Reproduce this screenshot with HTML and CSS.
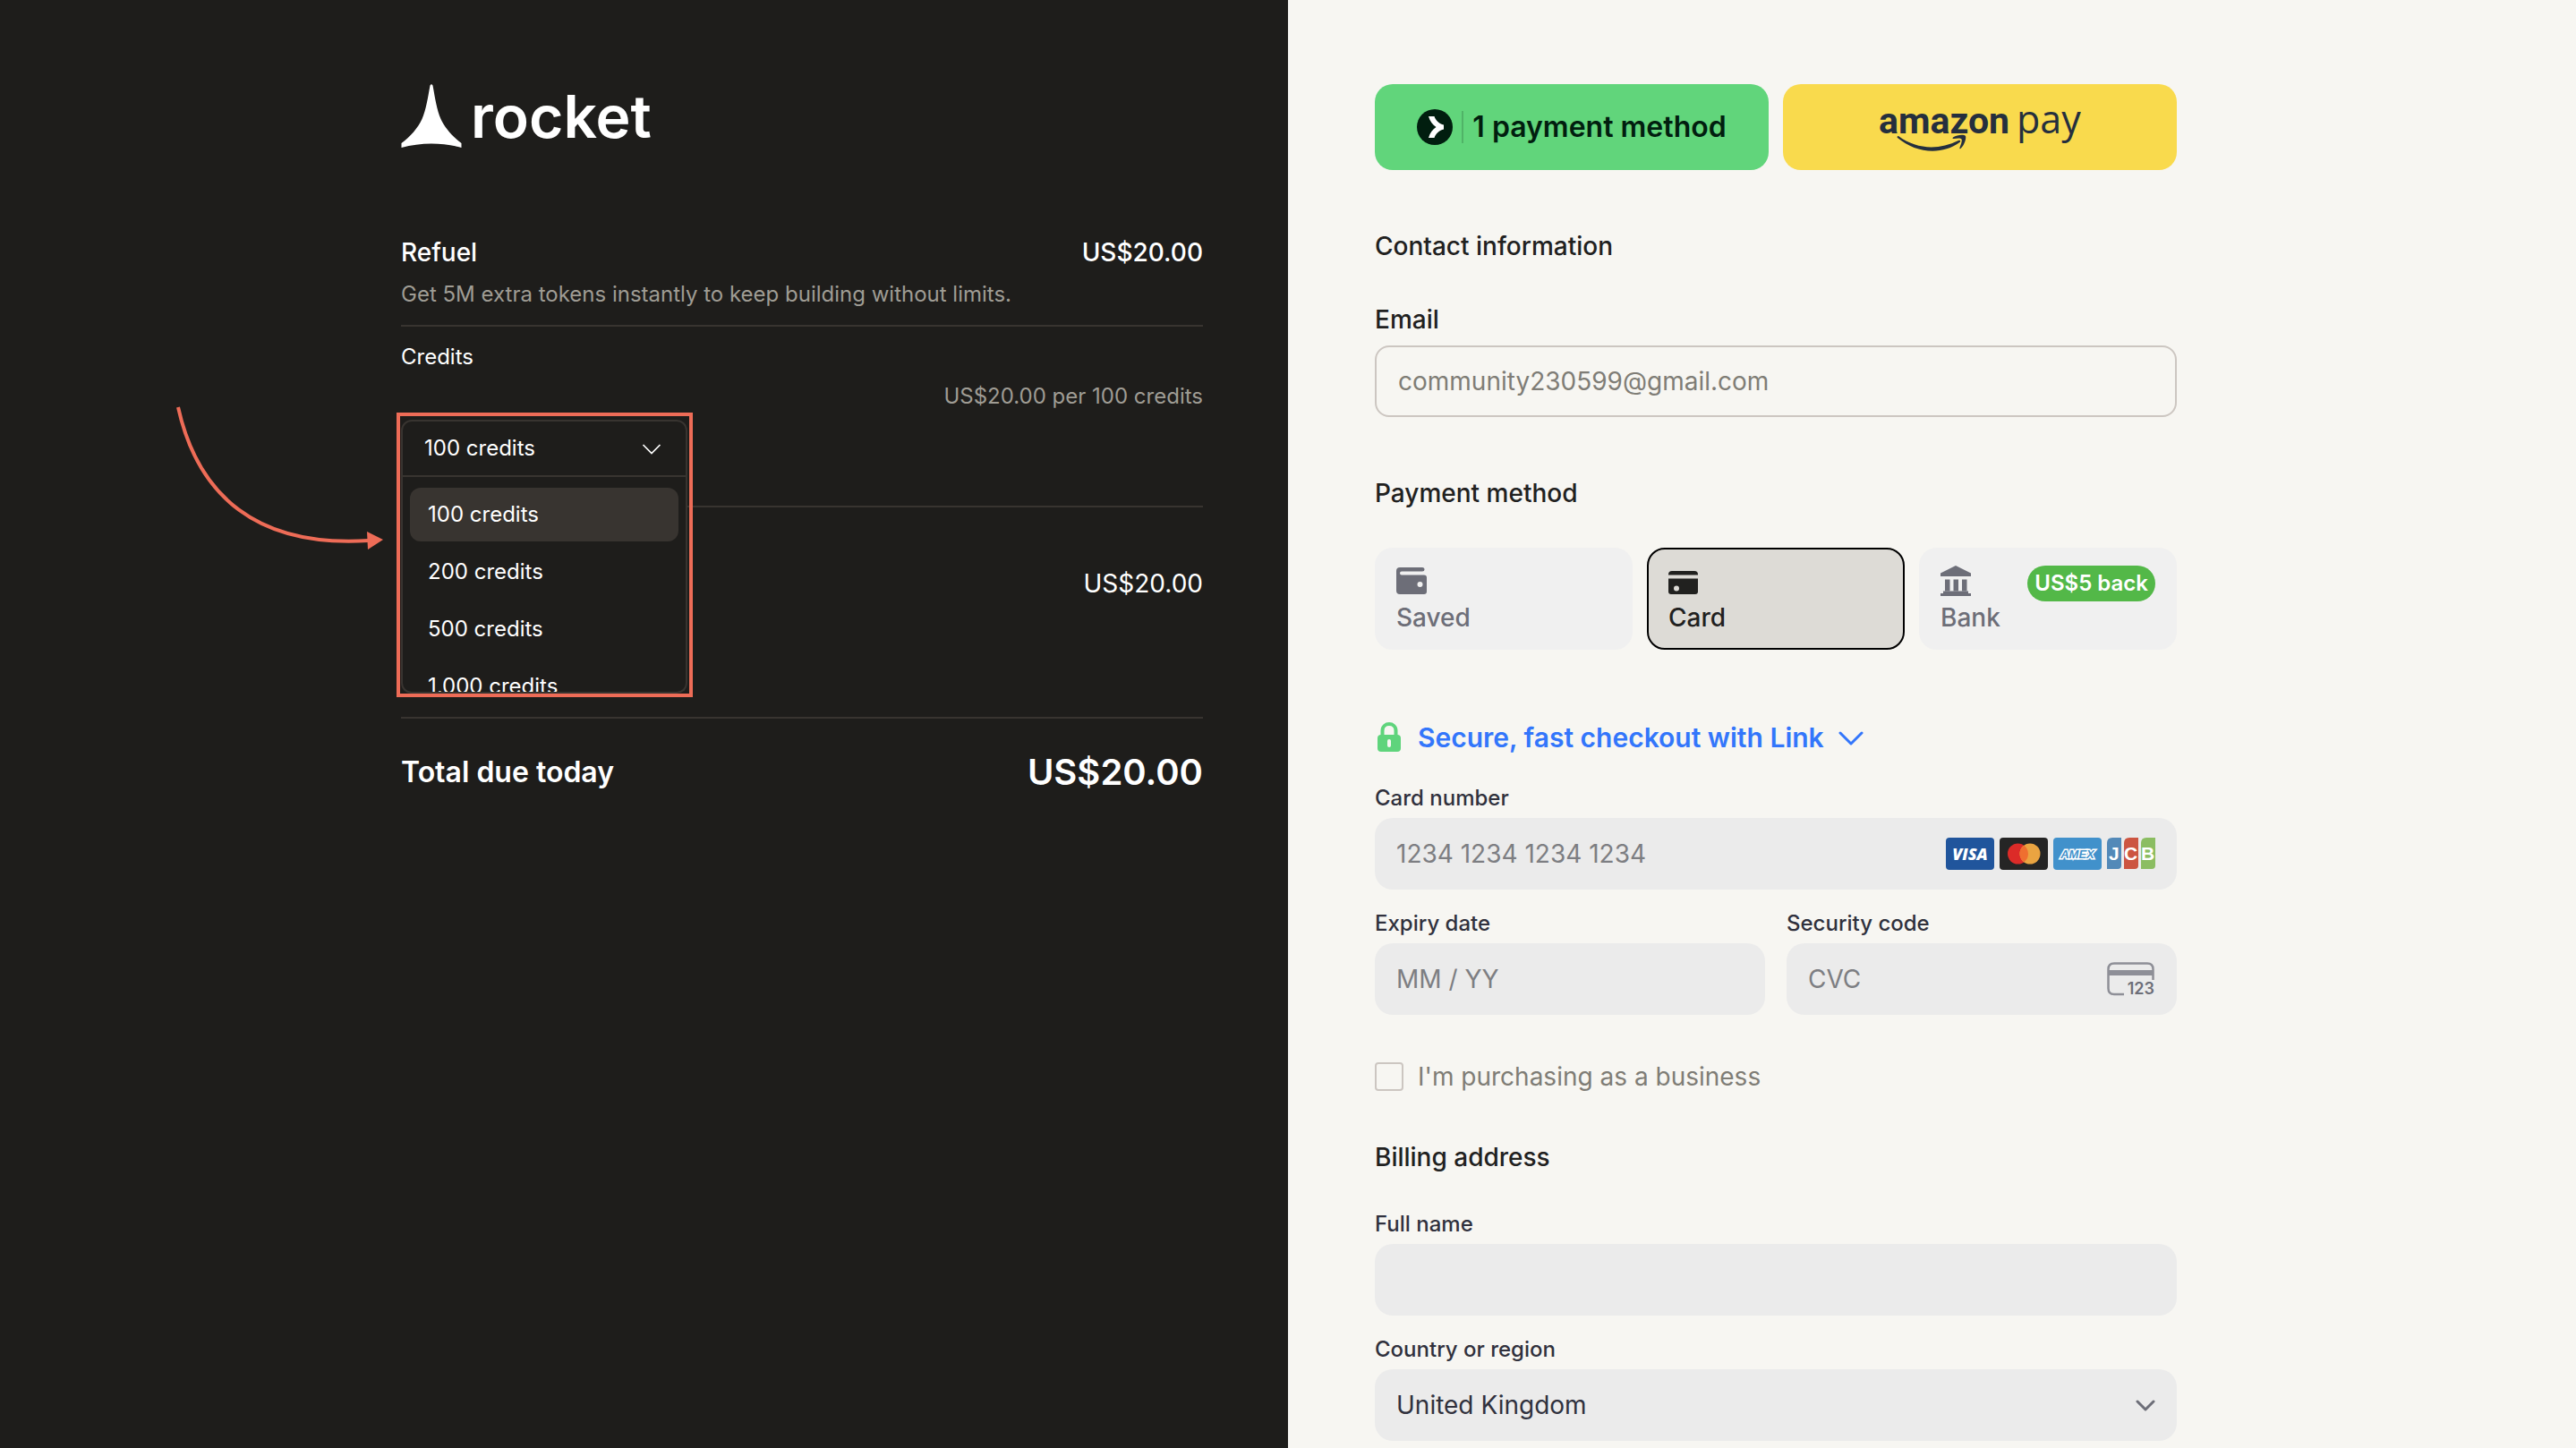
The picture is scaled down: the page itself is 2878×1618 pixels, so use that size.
FILE: index.html
```html
<!DOCTYPE html>
<html lang="en">
<head>
    <meta charset="UTF-8">
    <meta name="viewport" content="width=device-width, initial-scale=1.0">
    <title>Rocket Checkout</title>
    <link rel="stylesheet" href="styles.css">
</head>
<body>

    <div class="checkout">
        <!-- Order summary -->
        <section class="summary">
            <div class="column">
                <div class="logo">
                    <svg width="68" height="72" viewBox="0 0 68 72" fill="#fff" aria-hidden="true">
                        <path d="M32.5 1.5Q34 -1 35.500 1.500C38 15 40 29 44.500 39C49 49 58 59 67.500 66V71C46 65 22 65 .5 71V66C10 59 19 49 23.500 39C28 29 30 15 32.500 1.500Z"/>
                    </svg>
                    <span class="logo-text">rocket</span>
                </div>

                <div class="product">
                    <div class="row">
                        <span>Refuel</span>
                        <span>US$20.00</span>
                    </div>
                    <p class="note">Get 5M extra tokens instantly to keep building without limits.</p>
                </div>

                <div class="credits">
                    <label class="credits-label" for="credits">Credits</label>
                    <p class="note unit-price">US$20.00 per 100 credits</p>
                    <div class="picker">
                        <select class="picker-select" id="credits">
                            <option>100 credits</option>
                            <option>200 credits</option>
                            <option>500 credits</option>
                            <option>1,000 credits</option>
                        </select>
                        <svg class="picker-chevron" width="22" height="14" viewBox="0 0 22 14" fill="none" stroke="#fff" stroke-width="1.7" aria-hidden="true">
                            <path d="M1.500 2L11 11.500L20.500 2"/>
                        </svg>
                        <ul class="menu" role="listbox" aria-label="Credits">
                            <li class="menu-item selected" role="option" aria-selected="true">100 credits</li>
                            <li class="menu-item" role="option">200 credits</li>
                            <li class="menu-item" role="option">500 credits</li>
                            <li class="menu-item" role="option">1,000 credits</li>
                        </ul>
                        <div class="highlight"></div>
                        <svg class="arrow" width="236" height="164" viewBox="0 0 236 164" aria-hidden="true">
                            <path d="M4 3C26 102 92 160 217 152" fill="none" stroke="#ee6c57" stroke-width="4"/>
                            <path d="M215 142L233 151L216 162Z" fill="#ee6c57"/>
                        </svg>
                    </div>
                </div>

                <div class="subtotal">US$20.00</div>

                <div class="total">
                    <span class="total-label">Total due today</span>
                    <span class="total-price">US$20.00</span>
                </div>
            </div>
        </section>

        <!-- Payment form -->
        <form class="payment">
            <div class="column">
                <div class="express">
                    <button type="button" class="express-button link-pay">
                        <svg width="40" height="40" viewBox="0 0 40 40" aria-hidden="true">
                            <circle cx="20" cy="20" r="20" fill="#011e0f"/>
                            <path d="M13 8H19.500C21 12.500 25 16.500 30 17.500V22.500C25 23.500 21 27.500 19.500 32H13C14.500 27 17.500 22.500 21.500 20C17.500 17.500 14.500 13 13 8Z" fill="#fff"/>
                        </svg>
                        <span class="express-text">1 payment method</span>
                    </button>
                    <button type="button" class="express-button amazon-pay" aria-label="Amazon Pay">
                        <svg width="226" height="84" viewBox="0 -16 226 84" aria-hidden="true">
                            <text x="0" y="33" class="amazon-word">amazon</text>
                            <text x="154" y="33" class="pay-word">pay</text>
                            <path d="M22 36C42 51 67 52 89 41C91 40 92 41.500 90.500 43C70 58 41 55 21 38C20 37 21 35.500 22 36Z" fill="#252f3e"/>
                            <path d="M83 37.500C88 34 96 34 97 36C98 38 96 46 91.500 50C90.500 50.500 90 50 90.500 49C92 45 93.500 41 92.500 39.500C91.500 38 87 38.500 84 39C82.500 39 82 38.500 83 37.500Z" fill="#252f3e"/>
                        </svg>
                    </button>
                </div>

                <h2 class="heading contact-heading">Contact information</h2>
                <label class="heading email-label" for="email">Email</label>
                <input class="email" type="email" id="email" value="community230599@gmail.com">

                <h2 class="heading method-heading">Payment method</h2>
                <div class="tabs">
                    <button type="button" class="tab">
                        <svg width="34" height="34" viewBox="0 0 34 34" fill="#6d6e78" aria-hidden="true">
                            <path d="M4 2H29Q31.500 2 31.500 4.500Q31.500 6.500 29 6.500H6Q4 6.500 4 8.500Q4 10.500 6 10.500H31Q34 10.500 34 13.500V29Q34 32 31 32H4Q0 32 0 28V6Q0 2 4 2Z"/>
                            <circle cx="26.500" cy="21" r="3" fill="#f0f0f0"/>
                        </svg>
                        Saved
                    </button>
                    <button type="button" class="tab active">
                        <svg width="34" height="34" viewBox="0 0 34 34" fill="#21211f" aria-hidden="true">
                            <path d="M4 6H29Q33 6 33 10V10.500H0V10Q0 6 4 6Z"/>
                            <path d="M0 14.500H33V29Q33 32 30 32H3Q0 32 0 29Z"/>
                            <circle cx="9" cy="25.500" r="3" fill="#dddbd6"/>
                        </svg>
                        Card
                    </button>
                    <button type="button" class="tab">
                        <svg width="34" height="34" viewBox="0 0 34 34" fill="#6d6e78" aria-hidden="true">
                            <path d="M17 0L34 8.500V12H0V8.500Z"/>
                            <path d="M5 15.500H10.500V28.500H5ZM14.500 15.500H20V28.500H14.500ZM24 15.500H29.500V28.500H24Z"/>
                            <path d="M3 28.500H31V31H34V34H0V31H3Z"/>
                        </svg>
                        Bank
                        <span class="badge">US$5 back</span>
                    </button>
                </div>

                <button type="button" class="secure">
                    <svg width="32" height="34" viewBox="0 0 32 34" aria-hidden="true">
                        <path d="M8.500 15V9.500C8.500 -.5 23.500 -.5 23.500 9.500V15" fill="none" stroke="#5fd47c" stroke-width="4"/>
                        <rect x="3" y="14" width="26" height="19" rx="4" fill="#5fd47c"/>
                        <rect x="14" y="19" width="4" height="9" rx="2" fill="#f7f6f2"/>
                    </svg>
                    Secure, fast checkout with Link
                    <svg width="28" height="18" viewBox="0 0 28 18" fill="none" stroke="#3376fb" stroke-width="3" stroke-linecap="round" stroke-linejoin="round" aria-hidden="true">
                        <path d="M2 4L14 16L26 4"/>
                    </svg>
                </button>

                <div class="fields">
                    <div class="field full">
                        <label for="card-number">Card number</label>
                        <div class="control">
                            <input type="text" id="card-number" placeholder="1234 1234 1234 1234">
                            <div class="brands">
                                <svg width="54" height="36" viewBox="0 0 54 36" role="img" aria-label="Visa">
                                    <rect width="54" height="36" rx="4" fill="#20559c"/>
                                    <text x="27" y="25" text-anchor="middle" class="visa-word">VISA</text>
                                </svg>
                                <svg width="54" height="36" viewBox="0 0 54 36" role="img" aria-label="Mastercard">
                                    <rect width="54" height="36" rx="4" fill="#252525"/>
                                    <circle cx="20.500" cy="18" r="11.500" fill="#dc2b28"/>
                                    <circle cx="34" cy="18" r="11.500" fill="#eaa441"/>
                                    <path d="M27.250 8.700A11.500 11.500 0 0 1 27.250 27.300A11.500 11.500 0 0 1 27.250 8.700Z" fill="#ef6f30"/>
                                </svg>
                                <svg width="54" height="36" viewBox="0 0 54 36" role="img" aria-label="American Express">
                                    <rect width="54" height="36" rx="4" fill="#4191cb"/>
                                    <text x="27" y="23" text-anchor="middle" class="amex-word">AMEX</text>
                                </svg>
                                <svg width="54" height="36" viewBox="0 0 54 36" role="img" aria-label="JCB">
                                    <path d="M6 0H16V31Q16 35 12 35H0V6Q0 0 6 0Z" fill="#5389b8"/>
                                    <path d="M25 0H35V31Q35 35 31 35H19V6Q19 0 25 0Z" fill="#cc5541"/>
                                    <path d="M44 0H54V31Q54 35 50 35H38V6Q38 0 44 0Z" fill="#8bbd62"/>
                                    <text y="25" class="jcb-word"><tspan x="2">J</tspan><tspan x="19">C</tspan><tspan x="38">B</tspan></text>
                                </svg>
                            </div>
                        </div>
                    </div>
                    <div class="field">
                        <label for="expiry">Expiry date</label>
                        <div class="control">
                            <input type="text" id="expiry" placeholder="MM / YY">
                        </div>
                    </div>
                    <div class="field">
                        <label for="cvc">Security code</label>
                        <div class="control">
                            <input type="text" id="cvc" placeholder="CVC">
                            <svg width="54" height="44" viewBox="0 -3 54 44" aria-hidden="true">
                                <path d="M19 36H8Q1.500 36 1.500 29.500V8Q1.500 1.500 8 1.500H45Q51.500 1.500 51.500 8V20" fill="none" stroke="#8e8f97" stroke-width="2.500"/>
                                <rect x="1" y="9" width="51" height="6" fill="#8e8f97"/>
                                <text x="53" y="36" text-anchor="end" class="cvc-word">123</text>
                            </svg>
                        </div>
                    </div>
                </div>

                <label class="business">
                    <input type="checkbox" class="checkbox">
                    I'm purchasing as a business
                </label>

                <h2 class="heading billing-heading">Billing address</h2>
                <div class="fields">
                    <div class="field full">
                        <label for="full-name">Full name</label>
                        <div class="control">
                            <input type="text" id="full-name">
                        </div>
                    </div>
                    <div class="field full">
                        <label for="country">Country or region</label>
                        <div class="control">
                            <select id="country">
                                <option>United Kingdom</option>
                            </select>
                            <svg width="22" height="16" viewBox="0 0 22 16" fill="none" stroke="#6d6e78" stroke-width="3" stroke-linecap="round" stroke-linejoin="round" aria-hidden="true">
                                <path d="M2 4L11 13L20 4"/>
                            </svg>
                        </div>
                    </div>
                </div>
            </div>
        </form>
    </div>

</body>
</html>
```
FILE: styles.css
```css
* {
    box-sizing: border-box;
}

body {
    margin: 0;
    font-family: Inter, "Liberation Sans", sans-serif;
    font-size: 28px;
    line-height: 36px;
    background-color: #f7f6f2;
    color: #21211f;
}

button,
input,
select {
    font: inherit;
    color: inherit;
    margin: 0;
}

button {
    border: none;
    cursor: pointer;
}

h2,
p,
ul {
    margin: 0;
    padding: 0;
}

svg {
    display: block;
    flex-shrink: 0;
}

.checkout {
    display: grid;
    grid-template-columns: 1fr 1fr;
    min-height: 100vh;
}

.column {
    width: 100%;
    max-width: 896px;
}

/* Order summary */
.summary {
    display: flex;
    justify-content: flex-end;
    padding: 94px 95px 0;
    background-color: #1e1d1b;
    color: #fff;
}

.logo {
    display: flex;
    align-items: center;
    gap: 10px;
    height: 72px;
    margin-bottom: 98px;
}

.logo-text {
    font-size: 66px;
    font-weight: 600;
}

.row,
.total {
    display: flex;
    justify-content: space-between;
    align-items: center;
}

.row {
    font-weight: 500;
}

.note {
    font-size: 24px;
    line-height: 32px;
    color: #9f9c94;
}

.product {
    display: flex;
    flex-direction: column;
    gap: 13px;
    padding-bottom: 18px;
    border-bottom: 2px solid #383430;
}

.credits {
    padding: 18px 0 32px;
    border-bottom: 2px solid #383430;
}

.credits-label {
    display: block;
    font-size: 24px;
    line-height: 32px;
    margin-bottom: 12px;
}

.unit-price {
    text-align: right;
    margin-bottom: 10px;
}

.picker {
    position: relative;
    width: 320px;
    font-size: 24px;
    line-height: 32px;
}

.picker-select {
    display: block;
    width: 100%;
    height: 64px;
    padding: 0 24px;
    appearance: none;
    background-color: #1e1d1b;
    border: 2px solid #383430;
    border-radius: 12px 12px 0 0;
}

.picker-chevron {
    position: absolute;
    top: 26px;
    right: 29px;
}

.menu {
    position: absolute;
    top: 64px;
    left: 0;
    z-index: 1;
    width: 100%;
    height: 242px;
    padding: 12px 8px 0;
    overflow: hidden;
    list-style: none;
    background-color: #1e1d1b;
    border: 2px solid #383430;
    border-top: none;
    border-radius: 0 0 12px 12px;
}

.menu-item {
    padding: 14px 20px;
    margin-bottom: 4px;
    border-radius: 12px;
}

.menu-item.selected {
    background-color: #383430;
}

.highlight {
    position: absolute;
    top: -8px;
    left: -5px;
    z-index: 2;
    width: 331px;
    height: 318px;
    border: 4px solid #ee6c57;
}

.arrow {
    position: absolute;
    top: -17px;
    left: -253px;
}

.subtotal {
    padding: 67px 0 131px;
    text-align: right;
    border-bottom: 2px solid #383430;
}

.total {
    padding-top: 36px;
    font-weight: 600;
    line-height: 48px;
}

.total-label {
    font-size: 32px;
}

.total-price {
    font-size: 40px;
}

/* Payment form */
.payment {
    padding: 94px 97px 0;
}

.express {
    display: grid;
    grid-template-columns: 1fr 1fr;
    gap: 16px;
}

.express-button {
    display: flex;
    justify-content: center;
    align-items: center;
    gap: 10px;
    height: 96px;
    padding: 0;
    border-radius: 20px;
}

.link-pay {
    background-color: #61d57b;
    color: #011e0f;
}

.express-text {
    padding-left: 10px;
    border-left: 2px solid #50b367;
    font-size: 32px;
    font-weight: 600;
}

.amazon-pay {
    background-color: #f9da4d;
}

.amazon-word {
    font-family: Roboto, sans-serif;
    font-size: 41px;
    font-weight: 700;
    fill: #252f3e;
}

.pay-word {
    font-family: "Open Sans", sans-serif;
    font-size: 43px;
    fill: #252f3e;
}

.heading {
    display: block;
    font-size: 28px;
    font-weight: 500;
    line-height: 36px;
}

.contact-heading {
    margin: 67px 0 46px;
}

.email-label {
    margin-bottom: 11px;
}

.email {
    display: block;
    width: 100%;
    height: 80px;
    padding: 0 24px;
    background-color: transparent;
    border: 2px solid #ccc6c1;
    border-radius: 16px;
    color: #7f7d76;
}

.method-heading {
    margin: 67px 0 43px;
}

.tabs {
    display: grid;
    grid-template-columns: repeat(3, 1fr);
    gap: 16px;
}

.tab {
    position: relative;
    display: flex;
    flex-direction: column;
    align-items: flex-start;
    gap: 8px;
    height: 114px;
    padding: 18px 22px;
    background-color: #f0f0f0;
    border: 2px solid #f0f0f0;
    border-radius: 20px;
    color: #6d6e78;
    font-weight: 500;
    line-height: 32px;
}

.tab.active {
    background-color: #dddbd6;
    border-color: #000;
    color: #21211f;
}

.badge {
    position: absolute;
    top: 18px;
    right: 22px;
    padding: 0 8px;
    background-color: #53b848;
    border-radius: 20px;
    color: #fff;
    font-size: 24px;
    font-weight: 600;
    line-height: 40px;
}

.secure {
    display: flex;
    align-items: center;
    gap: 16px;
    margin: 80px 0 34px;
    padding: 0;
    background: none;
    color: #3376fb;
    font-size: 30px;
    font-weight: 600;
}

.fields {
    display: grid;
    grid-template-columns: repeat(2, minmax(0, 1fr));
    gap: 22px 24px;
}

.field label {
    display: block;
    margin-bottom: 6px;
    color: #30313d;
    font-size: 24px;
    font-weight: 500;
    line-height: 32px;
}

.full {
    grid-column: 1 / -1;
}

.control {
    display: flex;
    align-items: center;
    height: 80px;
    padding: 0 24px;
    background-color: #ebebeb;
    border-radius: 20px;
}

.control input,
.control select {
    flex: 1;
    min-width: 0;
    height: 100%;
    padding: 0;
    background: none;
    border: none;
    appearance: none;
    color: #30313d;
}

.control input::placeholder {
    color: #7d7e82;
}

.brands {
    display: flex;
    gap: 6px;
}

.visa-word {
    font-family: "Open Sans", sans-serif;
    font-size: 18px;
    font-style: italic;
    font-weight: 800;
    fill: #fff;
}

.amex-word {
    font-family: "Liberation Sans", sans-serif;
    font-size: 13px;
    font-style: italic;
    font-weight: 700;
    fill: #4191cb;
    stroke: #fff;
    stroke-width: 3px;
    paint-order: stroke;
}

.jcb-word {
    font-family: "Liberation Sans", sans-serif;
    font-size: 21px;
    font-weight: 700;
    fill: #fff;
}

.cvc-word {
    font-size: 18px;
    font-weight: 600;
    fill: #6d6e78;
}

.business {
    display: flex;
    align-items: center;
    gap: 16px;
    margin: 51px 0 54px;
    color: #7f7d76;
}

.checkbox {
    width: 32px;
    height: 32px;
    appearance: none;
    border: 2px solid #ccc6c1;
    border-radius: 4px;
}

.billing-heading {
    margin-bottom: 41px;
}
```
